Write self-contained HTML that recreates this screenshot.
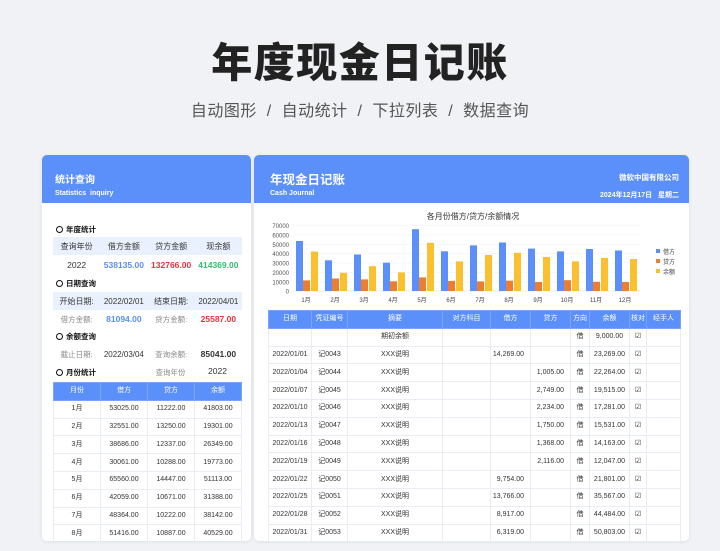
<!DOCTYPE html>
<html><head><meta charset="utf-8"><style>
*{margin:0;padding:0;box-sizing:border-box}
body{width:720px;height:551px;background:#f1f2f5;font-family:"Liberation Sans","Noto Sans CJK SC",sans-serif;position:relative;overflow:hidden;color:#333}
.abs{position:absolute}
h1{position:absolute;left:0;width:720px;top:35px;text-align:center;font-size:41px;font-weight:900;color:#222;letter-spacing:1.5px;line-height:56px}
.sub{position:absolute;left:0;width:720px;top:101px;text-align:center;font-size:16px;color:#555;line-height:22px;letter-spacing:0.5px}
.panel{position:absolute;background:#fff;border-radius:5px;overflow:hidden;box-shadow:0 1px 4px rgba(0,0,0,.08)}
.hd{position:absolute;left:0;top:0;right:0;height:48px;background:#5b8ff9;color:#fff}
.sec{position:absolute;left:56px;font-size:7.5px;font-weight:bold;color:#111}
.sec:before{content:"";display:inline-block;width:5px;height:5px;border:1.2px solid #111;border-radius:50%;margin-right:3px;vertical-align:-1px}
.row{position:absolute;left:53px;width:189px;height:18px;display:flex;font-size:8px;align-items:center}
.row div{flex:1;text-align:center}
table{border-collapse:collapse;table-layout:fixed;position:absolute}
tr{height:17.8px}
td,th{font-size:7px;height:17.8px;line-height:10px;padding:0;border:1px solid #e8ecf3;text-align:center;white-space:nowrap;overflow:hidden;font-weight:normal;color:#333}
th{background:#5b8ff9;color:#fff;border-color:#7aa4fa}
.r{text-align:right;padding-right:6px}
</style></head><body>
<h1>年度现金日记账</h1>
<div class="sub">自动图形 &nbsp;/&nbsp; 自动统计 &nbsp;/&nbsp; 下拉列表 &nbsp;/&nbsp; 数据查询</div>

<div class="panel" style="left:42px;top:155px;width:209px;height:386px;">
  <div class="hd"><div class="abs" style="left:13px;top:16px;font-size:10px;font-weight:bold">统计查询</div><div class="abs" style="left:13px;top:35px;font-size:7px;font-weight:bold">Statistics&nbsp; inquiry</div></div>
</div>
<div class="panel" style="left:254px;top:155px;width:435px;height:386px;">
  <div class="hd"><div class="abs" style="left:16px;top:14px;font-size:12.5px;font-weight:bold">年现金日记账</div><div class="abs" style="left:16px;top:35px;font-size:7px;font-weight:bold">Cash Journal</div>
  <div class="abs" style="right:10px;top:17px;font-size:7.5px;font-weight:bold">微软中国有限公司</div>
  <div class="abs" style="right:10px;top:35px;font-size:7px;font-weight:bold">2024年12月17日&nbsp;&nbsp; 星期二</div></div>
</div>

<div class="sec" style="top:224px">年度统计</div>
<div class="row" style="top:237px;background:#eaf1fe;color:#333"><div>查询年份</div><div>借方金额</div><div>贷方金额</div><div>现余额</div></div>
<div class="row" style="top:256px;font-size:8.5px"><div>2022</div><div style="color:#5b8ff9;font-weight:bold">538135.00</div><div style="color:#e8303c;font-weight:bold">132766.00</div><div style="color:#2fbf71;font-weight:bold">414369.00</div></div>
<div class="sec" style="top:278px">日期查询</div>
<div class="row" style="top:292px;background:#eaf1fe"><div>开始日期:</div><div>2022/02/01</div><div>结束日期:</div><div>2022/04/01</div></div>
<div class="row" style="top:310px;font-size:8.5px"><div style="color:#888;font-size:7.5px">借方金额:</div><div style="color:#5b8ff9;font-weight:bold">81094.00</div><div style="color:#888;font-size:7.5px">贷方金额:</div><div style="color:#e8303c;font-weight:bold">25587.00</div></div>
<div class="sec" style="top:331px">余额查询</div>
<div class="row" style="top:345px"><div style="color:#888;font-size:7.5px">截止日期:</div><div>2022/03/04</div><div style="color:#888;font-size:7.5px">查询余额:</div><div style="font-weight:bold;font-size:8.5px">85041.00</div></div>
<div class="sec" style="top:367px">月份统计</div>
<div class="abs" style="left:147px;top:367px;font-size:7.5px;color:#888;width:47px;text-align:center">查询年份</div>
<div class="abs" style="left:194px;top:366px;font-size:8.5px;width:47px;text-align:center">2022</div>
<table style="left:53px;top:382px;width:189px">
<tr><th>月份</th><th>借方</th><th>贷方</th><th>余额</th></tr>
<tr><td>1月</td><td>53025.00</td><td>11222.00</td><td>41803.00</td></tr>
<tr><td>2月</td><td>32551.00</td><td>13250.00</td><td>19301.00</td></tr>
<tr><td>3月</td><td>38686.00</td><td>12337.00</td><td>26349.00</td></tr>
<tr><td>4月</td><td>30061.00</td><td>10288.00</td><td>19773.00</td></tr>
<tr><td>5月</td><td>65560.00</td><td>14447.00</td><td>51113.00</td></tr>
<tr><td>6月</td><td>42059.00</td><td>10671.00</td><td>31388.00</td></tr>
<tr><td>7月</td><td>48364.00</td><td>10222.00</td><td>38142.00</td></tr>
<tr><td>8月</td><td>51416.00</td><td>10887.00</td><td>40529.00</td></tr>
</table>

<svg class="abs" style="left:0;top:0" width="720" height="551" font-family="Liberation Sans,Noto Sans CJK SC,sans-serif">
<text x="473" y="219" font-size="8" text-anchor="middle" fill="#333">各月份借方/贷方/余额情况</text>
<g font-size="6" fill="#555" text-anchor="end">
<text x="289" y="228">70000</text><text x="289" y="237.5">60000</text><text x="289" y="247">50000</text><text x="289" y="256">40000</text><text x="289" y="265.5">30000</text><text x="289" y="275">20000</text><text x="289" y="284.5">10000</text><text x="289" y="293.5">0</text></g>
<g stroke="#eef0f4" stroke-width="0.6"><line x1="293" y1="225.5" x2="640" y2="225.5"/><line x1="293" y1="235" x2="640" y2="235"/><line x1="293" y1="244.5" x2="640" y2="244.5"/><line x1="293" y1="253.5" x2="640" y2="253.5"/><line x1="293" y1="263" x2="640" y2="263"/><line x1="293" y1="272.5" x2="640" y2="272.5"/><line x1="293" y1="282" x2="640" y2="282"/><line x1="293" y1="291" x2="640" y2="291" stroke="#ddd"/></g>
<g fill="#5b8ff9">
<rect x="296" y="241" width="7" height="50"/><rect x="325" y="260.3" width="7" height="30.7"/><rect x="354" y="254.5" width="7" height="36.5"/><rect x="383" y="262.7" width="7" height="28.3"/><rect x="412" y="229.2" width="7" height="61.8"/><rect x="441" y="251.3" width="7" height="39.7"/><rect x="470" y="245.4" width="7" height="45.6"/><rect x="499" y="242.5" width="7" height="48.5"/><rect x="528" y="248.6" width="7" height="42.4"/><rect x="557" y="251.4" width="7" height="39.6"/><rect x="586" y="249" width="7" height="42"/><rect x="615" y="250.5" width="7" height="40.5"/></g>
<g fill="#ed7d31">
<rect x="303" y="280.4" width="7" height="10.6"/><rect x="332" y="278.5" width="7" height="12.5"/><rect x="361" y="279.4" width="7" height="11.6"/><rect x="390" y="281.3" width="7" height="9.7"/><rect x="419" y="277.4" width="7" height="13.6"/><rect x="448" y="280.9" width="7" height="10.1"/><rect x="477" y="281.4" width="7" height="9.6"/><rect x="506" y="280.7" width="7" height="10.3"/><rect x="535" y="282" width="7" height="9"/><rect x="564" y="280.2" width="7" height="10.8"/><rect x="593" y="281.8" width="7" height="9.2"/><rect x="622" y="282" width="7" height="9"/></g>
<g fill="#fbc02d">
<rect x="311" y="251.6" width="7" height="39.4"/><rect x="340" y="272.8" width="7" height="18.2"/><rect x="369" y="266.2" width="7" height="24.8"/><rect x="398" y="272.4" width="7" height="18.6"/><rect x="427" y="242.8" width="7" height="48.2"/><rect x="456" y="261.4" width="7" height="29.6"/><rect x="485" y="255" width="7" height="36"/><rect x="514" y="252.8" width="7" height="38.2"/><rect x="543" y="257" width="7" height="34"/><rect x="572" y="261.3" width="7" height="29.7"/><rect x="601" y="258" width="7" height="33"/><rect x="630" y="259" width="7" height="32"/></g>
<g font-size="6" fill="#444" text-anchor="middle">
<text x="306" y="302">1月</text><text x="335" y="302">2月</text><text x="364" y="302">3月</text><text x="393" y="302">4月</text><text x="422" y="302">5月</text><text x="451" y="302">6月</text><text x="480" y="302">7月</text><text x="509" y="302">8月</text><text x="538" y="302">9月</text><text x="567" y="302">10月</text><text x="596" y="302">11月</text><text x="625" y="302">12月</text></g>
<g font-size="6" fill="#444"><rect x="656" y="249" width="4" height="4" fill="#5b8ff9"/><text x="663" y="254">借方</text>
<rect x="656" y="259" width="4" height="4" fill="#ed7d31"/><text x="663" y="264">贷方</text>
<rect x="656" y="269" width="4" height="4" fill="#fbc02d"/><text x="663" y="274">余额</text></g>
</svg>

<table style="left:268px;top:310px;width:412px">
<colgroup><col style="width:43px"><col style="width:36px"><col style="width:95px"><col style="width:48px"><col style="width:40px"><col style="width:40px"><col style="width:19px"><col style="width:40px"><col style="width:17px"><col style="width:34px"></colgroup>
<tr><th>日期</th><th>凭证编号</th><th>摘要</th><th>对方科目</th><th>借方</th><th>贷方</th><th>方向</th><th>余额</th><th>核对</th><th>经手人</th></tr>
<tr><td></td><td></td><td>期初余额</td><td></td><td></td><td></td><td>借</td><td>9,000.00</td><td>☑</td><td></td></tr>
<tr><td>2022/01/01</td><td>记0043</td><td>XXX说明</td><td></td><td class="r">14,269.00</td><td></td><td>借</td><td>23,269.00</td><td>☑</td><td></td></tr>
<tr><td>2022/01/04</td><td>记0044</td><td>XXX说明</td><td></td><td></td><td class="r">1,005.00</td><td>借</td><td>22,264.00</td><td>☑</td><td></td></tr>
<tr><td>2022/01/07</td><td>记0045</td><td>XXX说明</td><td></td><td></td><td class="r">2,749.00</td><td>借</td><td>19,515.00</td><td>☑</td><td></td></tr>
<tr><td>2022/01/10</td><td>记0046</td><td>XXX说明</td><td></td><td></td><td class="r">2,234.00</td><td>借</td><td>17,281.00</td><td>☑</td><td></td></tr>
<tr><td>2022/01/13</td><td>记0047</td><td>XXX说明</td><td></td><td></td><td class="r">1,750.00</td><td>借</td><td>15,531.00</td><td>☑</td><td></td></tr>
<tr><td>2022/01/16</td><td>记0048</td><td>XXX说明</td><td></td><td></td><td class="r">1,368.00</td><td>借</td><td>14,163.00</td><td>☑</td><td></td></tr>
<tr><td>2022/01/19</td><td>记0049</td><td>XXX说明</td><td></td><td></td><td class="r">2,116.00</td><td>借</td><td>12,047.00</td><td>☑</td><td></td></tr>
<tr><td>2022/01/22</td><td>记0050</td><td>XXX说明</td><td></td><td class="r">9,754.00</td><td></td><td>借</td><td>21,801.00</td><td>☑</td><td></td></tr>
<tr><td>2022/01/25</td><td>记0051</td><td>XXX说明</td><td></td><td class="r">13,766.00</td><td></td><td>借</td><td>35,567.00</td><td>☑</td><td></td></tr>
<tr><td>2022/01/28</td><td>记0052</td><td>XXX说明</td><td></td><td class="r">8,917.00</td><td></td><td>借</td><td>44,484.00</td><td>☑</td><td></td></tr>
<tr><td>2022/01/31</td><td>记0053</td><td>XXX说明</td><td></td><td class="r">6,319.00</td><td></td><td>借</td><td>50,803.00</td><td>☑</td><td></td></tr>
</table>
</body></html>
